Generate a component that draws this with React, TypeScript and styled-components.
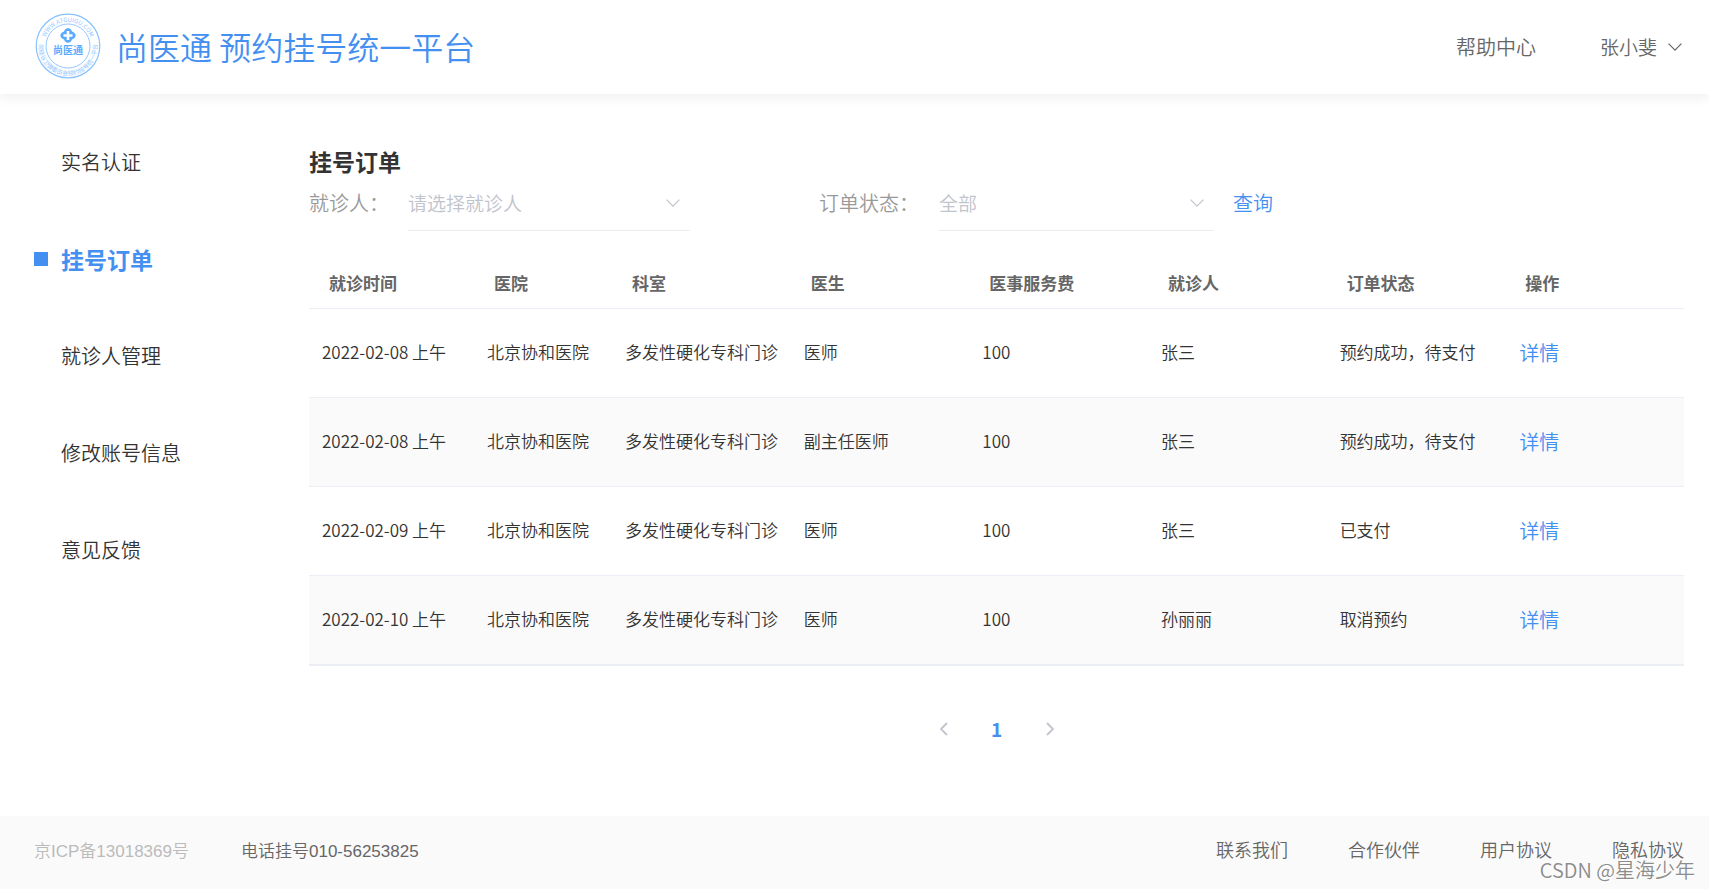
import React from "react";
import styled, { createGlobalStyle } from "styled-components";

const cjk = '"Noto Sans CJK SC", "Noto Sans", sans-serif';
const blue = "#4490f1";

const GlobalStyle = createGlobalStyle`
  * { box-sizing: border-box; }
  body { margin: 0; background: #fff; color: #333; font: 350 17px/24px ${cjk}; }
  button, select { font: inherit; color: inherit; margin: 0; padding: 0; border: 0; background: none; }
  button { cursor: pointer; }
  a { color: inherit; text-decoration: none; }
`;

const Page = styled.div`
  position: relative;
  display: flex;
  flex-direction: column;
  min-height: 100vh;
`;

const Header = styled.header`
  display: flex;
  align-items: center;
  justify-content: space-between;
  height: 94px;
  padding: 0 27px 0 34px;
  box-shadow: 0 0 14px 2px rgba(0, 0, 0, 0.08);
`;

const Brand = styled.a`
  display: flex;
  align-items: center;
  gap: 14px;
  padding-bottom: 2px;
  color: ${blue};
  font-size: 32px;
  line-height: 48px;
`;

const TopNav = styled.nav`
  display: flex;
  align-items: center;
  gap: 64px;
  color: #666;
  font-size: 20px;
`;

const UserMenu = styled.button`
  display: flex;
  align-items: center;
  gap: 11px;
  font-size: 19px;
`;

const Main = styled.div`
  display: flex;
  flex: 1;
  padding: 48px 25px 0 34px;
`;

const Sidebar = styled.nav`
  display: flex;
  flex-direction: column;
  gap: 57px;
  flex: 0 0 275px;
`;

const SideLink = styled.a<{ $active?: boolean }>`
  display: flex;
  align-items: center;
  gap: 13px;
  height: 40px;
  color: ${(p) => (p.$active ? blue : "#333")};
  font-size: ${(p) => (p.$active ? 23 : 20)}px;
  font-weight: ${(p) => (p.$active ? 700 : 350)};

  &::before {
    content: "";
    width: 14px;
    height: 14px;
    background: ${(p) => (p.$active ? blue : "transparent")};
  }
`;

const Content = styled.main`
  flex: 1;
  min-width: 0;
`;

const Title = styled.h1`
  margin: 0 0 3px;
  font-size: 23px;
  font-weight: 700;
  line-height: 38px;
`;

const Filters = styled.form`
  display: grid;
  grid-template-columns: 99px minmax(0, 282px) minmax(0, 129px) 120px minmax(0, 275px) auto;
  height: 48px;
  font-size: 20px;
  line-height: 40px;
`;

const FilterLabel = styled.label<{ $column: number }>`
  grid-column: ${(p) => p.$column};
  color: #999;
`;

const SelectBox = styled.div`
  position: relative;
  border-bottom: 1px solid #ebedf0;
  color: #c0c4cc;

  svg {
    position: absolute;
    top: 16px;
    right: 10px;
    pointer-events: none;
  }
`;

const Select = styled.select`
  display: block;
  width: 100%;
  height: 40px;
  appearance: none;
  font-size: 19px;
`;

const QueryButton = styled.button`
  justify-self: start;
  height: 40px;
  margin-left: 19px;
  color: ${blue};
`;

const Table = styled.table`
  width: 100%;
  margin-top: 28px;
  border-spacing: 0;
  border-bottom: 1px solid #ebeef5;
  table-layout: fixed;
`;

const HeadCell = styled.th<{ $width?: number }>`
  width: ${(p) => (p.$width ? `${p.$width}px` : "auto")};
  height: 50px;
  padding: 0 0 2px 20px;
  border-bottom: 1px solid #ebeef5;
  color: #666;
  font-weight: 700;
  text-align: left;
`;

const Row = styled.tr`
  &:nth-child(even) { background: #fafafa; }
`;

const Cell = styled.td`
  height: 89px;
  padding: 0 0 2px 13px;
  border-bottom: 1px solid #ebeef5;
  white-space: nowrap;
`;

const ActionCell = styled(Cell)`
  padding: 0 0 0 14px;
`;

const DetailLink = styled.a`
  color: ${blue};
  font-size: 20px;
`;

const Pager = styled.nav`
  display: flex;
  justify-content: center;
  margin: 44px 0;
`;

const PageButton = styled.button<{ $active?: boolean }>`
  display: flex;
  align-items: center;
  justify-content: center;
  width: 53px;
  height: 38px;
  color: ${(p) => (p.$active ? blue : "#c0c4cc")};
  font-size: 19px;
  font-weight: 700;
`;

const Footer = styled.footer`
  display: flex;
  align-items: baseline;
  justify-content: space-between;
  height: 73px;
  padding: 21px 25px 0 34px;
  background: #fafafa;
  color: #666;
`;

const FooterInfo = styled.div`
  display: flex;
  gap: 52px;
  font-family: "Liberation Sans", ${cjk};
`;

const Record = styled.span`
  color: #bbb;
`;

const FooterLinks = styled.nav`
  display: flex;
  gap: 60px;
  font-size: 18px;
`;

const Watermark = styled.div`
  position: absolute;
  right: 14px;
  bottom: 7px;
  color: #8c8c8c;
  font-size: 20px;
  text-shadow: 1px 1px 0 #fff;
`;

const Chevron = () => (
  <svg width="14" height="8" viewBox="0 0 14 8" fill="none" stroke="currentColor" strokeWidth="1.2" aria-hidden="true">
    <path d="M.6.7 7 7.1 13.4.7" />
  </svg>
);

const Arrow = ({ next }: { next?: boolean }) => (
  <svg width="8" height="14" viewBox="0 0 8 14" fill="none" stroke="currentColor" strokeWidth="1.8" aria-hidden="true">
    <path d={next ? "M1 1 7 7 1 13" : "M7 1 1 7 7 13"} />
  </svg>
);

const Logo = () => (
  <svg width="68" height="68" viewBox="0 0 68 68" aria-hidden="true">
    <defs>
      <path id="ring-top" d="M10 34a24 24 0 0 1 48 0" />
      <path id="ring-bottom" d="M5 30a29.3 29.3 0 1 0 58 0" />
    </defs>
    <g fill="none" stroke="#86c1ff">
      <circle cx="34" cy="34" r="31.8" strokeWidth="1.2" />
      <circle cx="34" cy="34" r="22" strokeWidth=".9" />
    </g>
    <g fill="#8fc6ff" fontFamily={cjk} fontWeight="400" textAnchor="middle">
      <text fontSize="6">
        <textPath href="#ring-top" startOffset="50%">WWW.ATGUIGU.COM</textPath>
      </text>
      <text fontSize="6">
        <textPath href="#ring-bottom" startOffset="50%">尚硅谷卫健委员会预约挂号统一平台</textPath>
      </text>
    </g>
    <path
      fill="#5aaaff"
      d="M31 17.6q3-2.6 6 0l1 1.9 2 .9q3.4 3 0 6.2l-2 .9-1 1.9q-3 2.6-6 0l-1-1.9-2-.9q-3.4-3.2 0-6.2l2-.9z"
    />
    <path d="M34 19v9M29.5 23.5h9" stroke="#fff" strokeWidth="2.6" />
    <text x="34" y="42" fill="#5aaaff" fontFamily={cjk} fontSize="10" fontWeight="700" textAnchor="middle">
      尚医通
    </text>
  </svg>
);

const sideItems = ["实名认证", "挂号订单", "就诊人管理", "修改账号信息", "意见反馈"];

const columns: { name: string; width?: number }[] = [
  { name: "就诊时间", width: 165 },
  { name: "医院", width: 138 },
  { name: "科室" },
  { name: "医生" },
  { name: "医事服务费" },
  { name: "就诊人" },
  { name: "订单状态" },
  { name: "操作" },
];

const orders = [
  ["2022-02-08 上午", "北京协和医院", "多发性硬化专科门诊", "医师", "100", "张三", "预约成功，待支付"],
  ["2022-02-08 上午", "北京协和医院", "多发性硬化专科门诊", "副主任医师", "100", "张三", "预约成功，待支付"],
  ["2022-02-09 上午", "北京协和医院", "多发性硬化专科门诊", "医师", "100", "张三", "已支付"],
  ["2022-02-10 上午", "北京协和医院", "多发性硬化专科门诊", "医师", "100", "孙丽丽", "取消预约"],
];

export default function App() {
  return (
    <Page lang="zh-CN">
      <GlobalStyle />
      <Header>
        <Brand href="#">
          <Logo />
          尚医通 预约挂号统一平台
        </Brand>
        <TopNav>
          <a href="#help">帮助中心</a>
          <UserMenu type="button">
            张小斐
            <Chevron />
          </UserMenu>
        </TopNav>
      </Header>

      <Main>
        <Sidebar>
          {sideItems.map((item) => (
            <SideLink key={item} href="#" $active={item === "挂号订单"}>
              {item}
            </SideLink>
          ))}
        </Sidebar>

        <Content>
          <Title>挂号订单</Title>
          <Filters onSubmit={(e) => e.preventDefault()}>
            <FilterLabel htmlFor="patient" $column={1}>就诊人：</FilterLabel>
            <SelectBox>
              <Select id="patient">
                <option>请选择就诊人</option>
              </Select>
              <Chevron />
            </SelectBox>
            <FilterLabel htmlFor="status" $column={4}>订单状态：</FilterLabel>
            <SelectBox>
              <Select id="status">
                <option>全部</option>
              </Select>
              <Chevron />
            </SelectBox>
            <QueryButton type="submit">查询</QueryButton>
          </Filters>

          <Table>
            <thead>
              <tr>
                {columns.map((c) => (
                  <HeadCell key={c.name} scope="col" $width={c.width}>{c.name}</HeadCell>
                ))}
              </tr>
            </thead>
            <tbody>
              {orders.map((order, i) => (
                <Row key={i}>
                  {order.map((value, j) => (
                    <Cell key={j}>{value}</Cell>
                  ))}
                  <ActionCell>
                    <DetailLink href="#detail">详情</DetailLink>
                  </ActionCell>
                </Row>
              ))}
            </tbody>
          </Table>

          <Pager>
            <PageButton type="button" aria-label="上一页"><Arrow /></PageButton>
            <PageButton type="button" $active>1</PageButton>
            <PageButton type="button" aria-label="下一页"><Arrow next /></PageButton>
          </Pager>
        </Content>
      </Main>

      <Footer>
        <FooterInfo>
          <Record>京ICP备13018369号</Record>
          <span>电话挂号010-56253825</span>
        </FooterInfo>
        <FooterLinks>
          <a href="#contact">联系我们</a>
          <a href="#partner">合作伙伴</a>
          <a href="#terms">用户协议</a>
          <a href="#privacy">隐私协议</a>
        </FooterLinks>
      </Footer>
      <Watermark>CSDN @星海少年</Watermark>
    </Page>
  );
}
